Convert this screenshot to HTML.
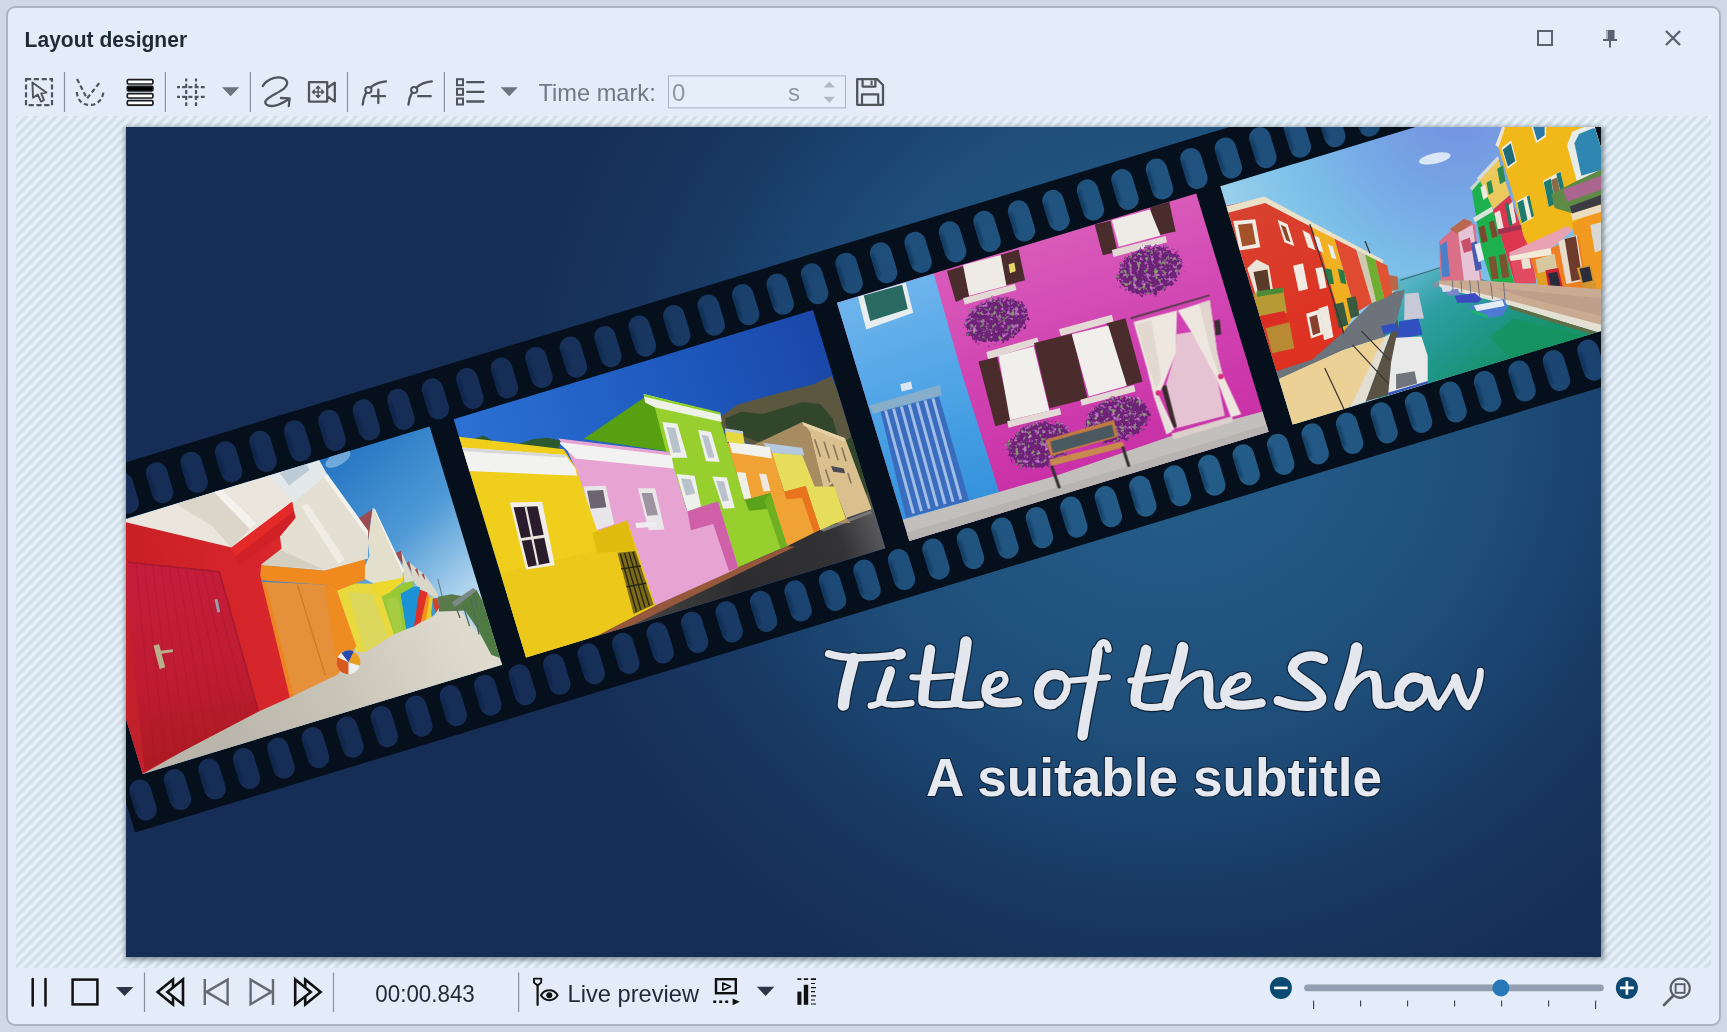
<!DOCTYPE html>
<html><head><meta charset="utf-8"><title>Layout designer</title>
<style>
html,body{margin:0;padding:0;background:#cfd8e4;width:1727px;height:1032px;overflow:hidden;font-family:"Liberation Sans",sans-serif;}
svg{position:absolute;left:0;top:0;display:block}
text{font-family:"Liberation Sans",sans-serif}
</style></head><body>
<svg width="1727" height="1032" viewBox="0 0 1727 1032">
<defs>
<pattern id="hatch" width="10" height="10" patternUnits="userSpaceOnUse" x="2.8" y="0">
<rect width="10" height="10" fill="#e6f2fb"/>
<path d="M-2.5,2.5 L2.5,-2.5 M-2.5,12.5 L12.5,-2.5 M7.5,12.5 L12.5,7.5" stroke="#d3e0e9" stroke-width="3.6"/>
</pattern>
<radialGradient id="bg" gradientUnits="userSpaceOnUse" cx="1170" cy="420" r="640" gradientTransform="translate(1170 420) scale(1.04 1) translate(-1170 -420)">
<stop offset="0" stop-color="#25608c"/><stop offset="0.25" stop-color="#225883"/><stop offset="0.5" stop-color="#1e4e79"/><stop offset="0.62" stop-color="#1b4470"/><stop offset="0.75" stop-color="#183964"/><stop offset="0.88" stop-color="#17325b"/><stop offset="1" stop-color="#162e56"/>
</radialGradient>
<clipPath id="cv"><rect x="126" y="127" width="1475" height="830"/></clipPath>
<filter id="hb" x="-50%" y="-50%" width="200%" height="200%"><feGaussianBlur stdDeviation="1.5"/></filter>
<filter id="sh" x="-5%" y="-5%" width="110%" height="110%"><feGaussianBlur stdDeviation="2.5"/></filter>
</defs>
<!-- window -->
<rect x="7" y="7" width="1713" height="1018" rx="8" ry="8" fill="#e3ecf8" stroke="#a9b4c4" stroke-width="2"/>
<!-- hatch area -->
<rect x="16" y="116" width="1695" height="852" fill="url(#hatch)"/>
<!-- canvas shadow -->
<rect x="125" y="127" width="1479" height="833" fill="#3a4450" opacity="0.55" filter="url(#sh)"/>
<rect x="126" y="127" width="1475" height="830" fill="url(#bg)"/>
<g id="canvas" clip-path="url(#cv)">
<g transform="rotate(-16.9)">
<path fill-rule="evenodd" fill="#06101c" d="M-112.8,478.9H1760V835.9H-112.8ZM-106.34,498.00A10.7,10.7 0 0 1 -84.94,498.00V518.60A10.7,10.7 0 0 1 -106.34,518.60ZM-106.34,796.70A10.7,10.7 0 0 1 -84.94,796.70V817.30A10.7,10.7 0 0 1 -106.34,817.30ZM-70.31,498.00A10.7,10.7 0 0 1 -48.91,498.00V518.60A10.7,10.7 0 0 1 -70.31,518.60ZM-70.31,796.70A10.7,10.7 0 0 1 -48.91,796.70V817.30A10.7,10.7 0 0 1 -70.31,817.30ZM-34.28,498.00A10.7,10.7 0 0 1 -12.88,498.00V518.60A10.7,10.7 0 0 1 -34.28,518.60ZM-34.28,796.70A10.7,10.7 0 0 1 -12.88,796.70V817.30A10.7,10.7 0 0 1 -34.28,817.30ZM1.75,498.00A10.7,10.7 0 0 1 23.15,498.00V518.60A10.7,10.7 0 0 1 1.75,518.60ZM1.75,796.70A10.7,10.7 0 0 1 23.15,796.70V817.30A10.7,10.7 0 0 1 1.75,817.30ZM37.78,498.00A10.7,10.7 0 0 1 59.18,498.00V518.60A10.7,10.7 0 0 1 37.78,518.60ZM37.78,796.70A10.7,10.7 0 0 1 59.18,796.70V817.30A10.7,10.7 0 0 1 37.78,817.30ZM73.81,498.00A10.7,10.7 0 0 1 95.21,498.00V518.60A10.7,10.7 0 0 1 73.81,518.60ZM73.81,796.70A10.7,10.7 0 0 1 95.21,796.70V817.30A10.7,10.7 0 0 1 73.81,817.30ZM109.84,498.00A10.7,10.7 0 0 1 131.24,498.00V518.60A10.7,10.7 0 0 1 109.84,518.60ZM109.84,796.70A10.7,10.7 0 0 1 131.24,796.70V817.30A10.7,10.7 0 0 1 109.84,817.30ZM145.87,498.00A10.7,10.7 0 0 1 167.27,498.00V518.60A10.7,10.7 0 0 1 145.87,518.60ZM145.87,796.70A10.7,10.7 0 0 1 167.27,796.70V817.30A10.7,10.7 0 0 1 145.87,817.30ZM181.90,498.00A10.7,10.7 0 0 1 203.30,498.00V518.60A10.7,10.7 0 0 1 181.90,518.60ZM181.90,796.70A10.7,10.7 0 0 1 203.30,796.70V817.30A10.7,10.7 0 0 1 181.90,817.30ZM217.93,498.00A10.7,10.7 0 0 1 239.33,498.00V518.60A10.7,10.7 0 0 1 217.93,518.60ZM217.93,796.70A10.7,10.7 0 0 1 239.33,796.70V817.30A10.7,10.7 0 0 1 217.93,817.30ZM253.96,498.00A10.7,10.7 0 0 1 275.36,498.00V518.60A10.7,10.7 0 0 1 253.96,518.60ZM253.96,796.70A10.7,10.7 0 0 1 275.36,796.70V817.30A10.7,10.7 0 0 1 253.96,817.30ZM289.99,498.00A10.7,10.7 0 0 1 311.39,498.00V518.60A10.7,10.7 0 0 1 289.99,518.60ZM289.99,796.70A10.7,10.7 0 0 1 311.39,796.70V817.30A10.7,10.7 0 0 1 289.99,817.30ZM326.02,498.00A10.7,10.7 0 0 1 347.42,498.00V518.60A10.7,10.7 0 0 1 326.02,518.60ZM326.02,796.70A10.7,10.7 0 0 1 347.42,796.70V817.30A10.7,10.7 0 0 1 326.02,817.30ZM362.05,498.00A10.7,10.7 0 0 1 383.45,498.00V518.60A10.7,10.7 0 0 1 362.05,518.60ZM362.05,796.70A10.7,10.7 0 0 1 383.45,796.70V817.30A10.7,10.7 0 0 1 362.05,817.30ZM398.08,498.00A10.7,10.7 0 0 1 419.48,498.00V518.60A10.7,10.7 0 0 1 398.08,518.60ZM398.08,796.70A10.7,10.7 0 0 1 419.48,796.70V817.30A10.7,10.7 0 0 1 398.08,817.30ZM434.11,498.00A10.7,10.7 0 0 1 455.51,498.00V518.60A10.7,10.7 0 0 1 434.11,518.60ZM434.11,796.70A10.7,10.7 0 0 1 455.51,796.70V817.30A10.7,10.7 0 0 1 434.11,817.30ZM470.14,498.00A10.7,10.7 0 0 1 491.54,498.00V518.60A10.7,10.7 0 0 1 470.14,518.60ZM470.14,796.70A10.7,10.7 0 0 1 491.54,796.70V817.30A10.7,10.7 0 0 1 470.14,817.30ZM506.17,498.00A10.7,10.7 0 0 1 527.57,498.00V518.60A10.7,10.7 0 0 1 506.17,518.60ZM506.17,796.70A10.7,10.7 0 0 1 527.57,796.70V817.30A10.7,10.7 0 0 1 506.17,817.30ZM542.20,498.00A10.7,10.7 0 0 1 563.60,498.00V518.60A10.7,10.7 0 0 1 542.20,518.60ZM542.20,796.70A10.7,10.7 0 0 1 563.60,796.70V817.30A10.7,10.7 0 0 1 542.20,817.30ZM578.23,498.00A10.7,10.7 0 0 1 599.63,498.00V518.60A10.7,10.7 0 0 1 578.23,518.60ZM578.23,796.70A10.7,10.7 0 0 1 599.63,796.70V817.30A10.7,10.7 0 0 1 578.23,817.30ZM614.26,498.00A10.7,10.7 0 0 1 635.66,498.00V518.60A10.7,10.7 0 0 1 614.26,518.60ZM614.26,796.70A10.7,10.7 0 0 1 635.66,796.70V817.30A10.7,10.7 0 0 1 614.26,817.30ZM650.29,498.00A10.7,10.7 0 0 1 671.69,498.00V518.60A10.7,10.7 0 0 1 650.29,518.60ZM650.29,796.70A10.7,10.7 0 0 1 671.69,796.70V817.30A10.7,10.7 0 0 1 650.29,817.30ZM686.32,498.00A10.7,10.7 0 0 1 707.72,498.00V518.60A10.7,10.7 0 0 1 686.32,518.60ZM686.32,796.70A10.7,10.7 0 0 1 707.72,796.70V817.30A10.7,10.7 0 0 1 686.32,817.30ZM722.35,498.00A10.7,10.7 0 0 1 743.75,498.00V518.60A10.7,10.7 0 0 1 722.35,518.60ZM722.35,796.70A10.7,10.7 0 0 1 743.75,796.70V817.30A10.7,10.7 0 0 1 722.35,817.30ZM758.38,498.00A10.7,10.7 0 0 1 779.78,498.00V518.60A10.7,10.7 0 0 1 758.38,518.60ZM758.38,796.70A10.7,10.7 0 0 1 779.78,796.70V817.30A10.7,10.7 0 0 1 758.38,817.30ZM794.41,498.00A10.7,10.7 0 0 1 815.81,498.00V518.60A10.7,10.7 0 0 1 794.41,518.60ZM794.41,796.70A10.7,10.7 0 0 1 815.81,796.70V817.30A10.7,10.7 0 0 1 794.41,817.30ZM830.44,498.00A10.7,10.7 0 0 1 851.84,498.00V518.60A10.7,10.7 0 0 1 830.44,518.60ZM830.44,796.70A10.7,10.7 0 0 1 851.84,796.70V817.30A10.7,10.7 0 0 1 830.44,817.30ZM866.47,498.00A10.7,10.7 0 0 1 887.87,498.00V518.60A10.7,10.7 0 0 1 866.47,518.60ZM866.47,796.70A10.7,10.7 0 0 1 887.87,796.70V817.30A10.7,10.7 0 0 1 866.47,817.30ZM902.50,498.00A10.7,10.7 0 0 1 923.90,498.00V518.60A10.7,10.7 0 0 1 902.50,518.60ZM902.50,796.70A10.7,10.7 0 0 1 923.90,796.70V817.30A10.7,10.7 0 0 1 902.50,817.30ZM938.53,498.00A10.7,10.7 0 0 1 959.93,498.00V518.60A10.7,10.7 0 0 1 938.53,518.60ZM938.53,796.70A10.7,10.7 0 0 1 959.93,796.70V817.30A10.7,10.7 0 0 1 938.53,817.30ZM974.56,498.00A10.7,10.7 0 0 1 995.96,498.00V518.60A10.7,10.7 0 0 1 974.56,518.60ZM974.56,796.70A10.7,10.7 0 0 1 995.96,796.70V817.30A10.7,10.7 0 0 1 974.56,817.30ZM1010.59,498.00A10.7,10.7 0 0 1 1031.99,498.00V518.60A10.7,10.7 0 0 1 1010.59,518.60ZM1010.59,796.70A10.7,10.7 0 0 1 1031.99,796.70V817.30A10.7,10.7 0 0 1 1010.59,817.30ZM1046.62,498.00A10.7,10.7 0 0 1 1068.02,498.00V518.60A10.7,10.7 0 0 1 1046.62,518.60ZM1046.62,796.70A10.7,10.7 0 0 1 1068.02,796.70V817.30A10.7,10.7 0 0 1 1046.62,817.30ZM1082.65,498.00A10.7,10.7 0 0 1 1104.05,498.00V518.60A10.7,10.7 0 0 1 1082.65,518.60ZM1082.65,796.70A10.7,10.7 0 0 1 1104.05,796.70V817.30A10.7,10.7 0 0 1 1082.65,817.30ZM1118.68,498.00A10.7,10.7 0 0 1 1140.08,498.00V518.60A10.7,10.7 0 0 1 1118.68,518.60ZM1118.68,796.70A10.7,10.7 0 0 1 1140.08,796.70V817.30A10.7,10.7 0 0 1 1118.68,817.30ZM1154.71,498.00A10.7,10.7 0 0 1 1176.11,498.00V518.60A10.7,10.7 0 0 1 1154.71,518.60ZM1154.71,796.70A10.7,10.7 0 0 1 1176.11,796.70V817.30A10.7,10.7 0 0 1 1154.71,817.30ZM1190.74,498.00A10.7,10.7 0 0 1 1212.14,498.00V518.60A10.7,10.7 0 0 1 1190.74,518.60ZM1190.74,796.70A10.7,10.7 0 0 1 1212.14,796.70V817.30A10.7,10.7 0 0 1 1190.74,817.30ZM1226.77,498.00A10.7,10.7 0 0 1 1248.17,498.00V518.60A10.7,10.7 0 0 1 1226.77,518.60ZM1226.77,796.70A10.7,10.7 0 0 1 1248.17,796.70V817.30A10.7,10.7 0 0 1 1226.77,817.30ZM1262.80,498.00A10.7,10.7 0 0 1 1284.20,498.00V518.60A10.7,10.7 0 0 1 1262.80,518.60ZM1262.80,796.70A10.7,10.7 0 0 1 1284.20,796.70V817.30A10.7,10.7 0 0 1 1262.80,817.30ZM1298.83,498.00A10.7,10.7 0 0 1 1320.23,498.00V518.60A10.7,10.7 0 0 1 1298.83,518.60ZM1298.83,796.70A10.7,10.7 0 0 1 1320.23,796.70V817.30A10.7,10.7 0 0 1 1298.83,817.30ZM1334.86,498.00A10.7,10.7 0 0 1 1356.26,498.00V518.60A10.7,10.7 0 0 1 1334.86,518.60ZM1334.86,796.70A10.7,10.7 0 0 1 1356.26,796.70V817.30A10.7,10.7 0 0 1 1334.86,817.30ZM1370.89,498.00A10.7,10.7 0 0 1 1392.29,498.00V518.60A10.7,10.7 0 0 1 1370.89,518.60ZM1370.89,796.70A10.7,10.7 0 0 1 1392.29,796.70V817.30A10.7,10.7 0 0 1 1370.89,817.30ZM1406.92,498.00A10.7,10.7 0 0 1 1428.32,498.00V518.60A10.7,10.7 0 0 1 1406.92,518.60ZM1406.92,796.70A10.7,10.7 0 0 1 1428.32,796.70V817.30A10.7,10.7 0 0 1 1406.92,817.30ZM1442.95,498.00A10.7,10.7 0 0 1 1464.35,498.00V518.60A10.7,10.7 0 0 1 1442.95,518.60ZM1442.95,796.70A10.7,10.7 0 0 1 1464.35,796.70V817.30A10.7,10.7 0 0 1 1442.95,817.30ZM1478.98,498.00A10.7,10.7 0 0 1 1500.38,498.00V518.60A10.7,10.7 0 0 1 1478.98,518.60ZM1478.98,796.70A10.7,10.7 0 0 1 1500.38,796.70V817.30A10.7,10.7 0 0 1 1478.98,817.30ZM1515.01,498.00A10.7,10.7 0 0 1 1536.41,498.00V518.60A10.7,10.7 0 0 1 1515.01,518.60ZM1515.01,796.70A10.7,10.7 0 0 1 1536.41,796.70V817.30A10.7,10.7 0 0 1 1515.01,817.30ZM1551.04,498.00A10.7,10.7 0 0 1 1572.44,498.00V518.60A10.7,10.7 0 0 1 1551.04,518.60ZM1551.04,796.70A10.7,10.7 0 0 1 1572.44,796.70V817.30A10.7,10.7 0 0 1 1551.04,817.30ZM1587.07,498.00A10.7,10.7 0 0 1 1608.47,498.00V518.60A10.7,10.7 0 0 1 1587.07,518.60ZM1587.07,796.70A10.7,10.7 0 0 1 1608.47,796.70V817.30A10.7,10.7 0 0 1 1587.07,817.30ZM1623.10,498.00A10.7,10.7 0 0 1 1644.50,498.00V518.60A10.7,10.7 0 0 1 1623.10,518.60ZM1623.10,796.70A10.7,10.7 0 0 1 1644.50,796.70V817.30A10.7,10.7 0 0 1 1623.10,817.30ZM1659.13,498.00A10.7,10.7 0 0 1 1680.53,498.00V518.60A10.7,10.7 0 0 1 1659.13,518.60ZM1659.13,796.70A10.7,10.7 0 0 1 1680.53,796.70V817.30A10.7,10.7 0 0 1 1659.13,817.30ZM1695.16,498.00A10.7,10.7 0 0 1 1716.56,498.00V518.60A10.7,10.7 0 0 1 1695.16,518.60ZM1695.16,796.70A10.7,10.7 0 0 1 1716.56,796.70V817.30A10.7,10.7 0 0 1 1695.16,817.30ZM1731.19,498.00A10.7,10.7 0 0 1 1752.59,498.00V518.60A10.7,10.7 0 0 1 1731.19,518.60ZM1731.19,796.70A10.7,10.7 0 0 1 1752.59,796.70V817.30A10.7,10.7 0 0 1 1731.19,817.30Z"/>
<path d="M-104.84,498.00V518.60M-104.84,796.70V817.30M-68.81,498.00V518.60M-68.81,796.70V817.30M-32.78,498.00V518.60M-32.78,796.70V817.30M3.25,498.00V518.60M3.25,796.70V817.30M39.28,498.00V518.60M39.28,796.70V817.30M75.31,498.00V518.60M75.31,796.70V817.30M111.34,498.00V518.60M111.34,796.70V817.30M147.37,498.00V518.60M147.37,796.70V817.30M183.40,498.00V518.60M183.40,796.70V817.30M219.43,498.00V518.60M219.43,796.70V817.30M255.46,498.00V518.60M255.46,796.70V817.30M291.49,498.00V518.60M291.49,796.70V817.30M327.52,498.00V518.60M327.52,796.70V817.30M363.55,498.00V518.60M363.55,796.70V817.30M399.58,498.00V518.60M399.58,796.70V817.30M435.61,498.00V518.60M435.61,796.70V817.30M471.64,498.00V518.60M471.64,796.70V817.30M507.67,498.00V518.60M507.67,796.70V817.30M543.70,498.00V518.60M543.70,796.70V817.30M579.73,498.00V518.60M579.73,796.70V817.30M615.76,498.00V518.60M615.76,796.70V817.30M651.79,498.00V518.60M651.79,796.70V817.30M687.82,498.00V518.60M687.82,796.70V817.30M723.85,498.00V518.60M723.85,796.70V817.30M759.88,498.00V518.60M759.88,796.70V817.30M795.91,498.00V518.60M795.91,796.70V817.30M831.94,498.00V518.60M831.94,796.70V817.30M867.97,498.00V518.60M867.97,796.70V817.30M904.00,498.00V518.60M904.00,796.70V817.30M940.03,498.00V518.60M940.03,796.70V817.30M976.06,498.00V518.60M976.06,796.70V817.30M1012.09,498.00V518.60M1012.09,796.70V817.30M1048.12,498.00V518.60M1048.12,796.70V817.30M1084.15,498.00V518.60M1084.15,796.70V817.30M1120.18,498.00V518.60M1120.18,796.70V817.30M1156.21,498.00V518.60M1156.21,796.70V817.30M1192.24,498.00V518.60M1192.24,796.70V817.30M1228.27,498.00V518.60M1228.27,796.70V817.30M1264.30,498.00V518.60M1264.30,796.70V817.30M1300.33,498.00V518.60M1300.33,796.70V817.30M1336.36,498.00V518.60M1336.36,796.70V817.30M1372.39,498.00V518.60M1372.39,796.70V817.30M1408.42,498.00V518.60M1408.42,796.70V817.30M1444.45,498.00V518.60M1444.45,796.70V817.30M1480.48,498.00V518.60M1480.48,796.70V817.30M1516.51,498.00V518.60M1516.51,796.70V817.30M1552.54,498.00V518.60M1552.54,796.70V817.30M1588.57,498.00V518.60M1588.57,796.70V817.30M1624.60,498.00V518.60M1624.60,796.70V817.30M1660.63,498.00V518.60M1660.63,796.70V817.30M1696.66,498.00V518.60M1696.66,796.70V817.30M1732.69,498.00V518.60M1732.69,796.70V817.30" stroke="#0a1830" stroke-opacity="0.45" stroke-width="4" stroke-linecap="round" fill="none" filter="url(#hb)"/>
</g>
<defs>
<clipPath id="p1"><rect transform="rotate(-16.9)" x="-88.4" y="533" width="375.5" height="249"/></clipPath>
<clipPath id="p2"><rect transform="rotate(-16.9)" x="312.2" y="533" width="375.5" height="249"/></clipPath>
<clipPath id="p3"><rect transform="rotate(-16.9)" x="712.8" y="533" width="375.5" height="249"/></clipPath>
<clipPath id="p4"><rect transform="rotate(-16.9)" x="1113.4" y="533" width="375.5" height="249"/></clipPath>
</defs>
<defs><linearGradient id="sky1" gradientUnits="userSpaceOnUse" x1="600" y1="100" x2="980" y2="520"><stop offset="0" stop-color="#2474c2"/><stop offset="0.55" stop-color="#4f9ad6"/><stop offset="1" stop-color="#b6d8ef"/></linearGradient><linearGradient id="gr1" gradientUnits="userSpaceOnUse" x1="300" y1="950" x2="950" y2="560"><stop offset="0" stop-color="#b9b5aa"/><stop offset="0.5" stop-color="#c9c5b9"/><stop offset="1" stop-color="#dedacd"/></linearGradient><linearGradient id="red1" gradientUnits="userSpaceOnUse" x1="20" y1="600" x2="450" y2="500"><stop offset="0" stop-color="#c11f24"/><stop offset="1" stop-color="#d8262c"/></linearGradient><linearGradient id="door1" gradientUnits="userSpaceOnUse" x1="150" y1="340" x2="250" y2="950"><stop offset="0" stop-color="#c51d3c"/><stop offset="0.6" stop-color="#bf1c32"/><stop offset="1" stop-color="#ad1a22"/></linearGradient><linearGradient id="red1c" gradientUnits="userSpaceOnUse" x1="0" y1="500" x2="520" y2="400"><stop offset="0" stop-color="#c61f24"/><stop offset="1" stop-color="#d9272c"/></linearGradient></defs>
<g clip-path="url(#p1)"><g transform="translate(120,420) scale(0.34874)">
<rect x="-200" y="-100" width="1500" height="1300" fill="url(#sky1)"/>
<ellipse cx="625" cy="112" rx="40" ry="18" fill="#8fbfe6" opacity="0.7" transform="rotate(-30 625 112)"/>
<polygon points="60,1005 160,962 400,815 490,775 690,650 830,585 905,540 960,528 1100,700 1100,720 70,1030" fill="url(#gr1)" />
<g transform="translate(516.15,0) scale(0.77787)">
<polygon points="508,652 560,642 600,650 640,640 660,700 570,704 512,706" fill="#5a7a4c" />
<polygon points="600,660 650,625 690,700 745,880 705,865 655,770 610,705" fill="#4f7a44" />
<polygon points="560,672 640,618 650,630 570,690" fill="#7a8a88" />
<path d="M575,690 L590,730 M600,680 L625,760 M630,660 L660,790 M640,640 L655,690" stroke="#55685e" stroke-width="5" fill="none"/>
<path d="M508,586 L524,650" stroke="#6a7a80" stroke-width="4"/>
<polygon points="400,522 430,548 455,566 480,598 510,645 506,657 440,622 420,596" fill="#d9d7c8" />
<polygon points="392,528 402,520 412,560" fill="#9a4c52" />
<polygon points="424,552 432,546 440,580" fill="#9a4c52" />
<polygon points="448,570 456,565 462,592" fill="#9a4c52" />
<polygon points="475,660 506,655 513,690 496,718 485,726" fill="#3a9ad0" />
<polygon points="488,662 506,656 513,690 500,712" fill="#d8402c" />
<polygon points="455,665 490,650 482,728 465,736" fill="#e6d030" />
<polygon points="430,660 470,640 478,652 465,736 445,746" fill="#f0921e" />
<polygon points="395,665 440,625 470,636 445,746 420,761" fill="#e0302a" />
<polygon points="370,640 415,614 442,616 420,761 390,771" fill="#1b92d4" />
<polygon points="372,482 421,592 385,601 380,556" fill="#dddcc8" />
<polygon points="350,492 373,481 379,532" fill="#9a4c52" />
<polygon points="300,650 330,635 385,600 421,594 416,616 370,641 391,771 345,791" fill="#98c932" />
<polygon points="318,662 360,650 380,770 348,788" fill="#a6cc44" />
<polygon points="100,600 270,604 300,650 346,790 240,856 205,852 140,700" fill="#e9d93c" />
<polygon points="178,632 266,642 326,800 236,852" fill="#dcd85e" />
<polygon points="270,600 380,570 381,596 330,636 300,652 270,622" fill="#ecd92c" />
<polygon points="268,324 381,556 376,582 270,602 222,578 256,500 250,450" fill="#e2e0cc" />
<polygon points="268,324 276,328 384,556 378,562" fill="#f4f2ea" />
<polygon points="198,376 266,328 250,452" fill="#9a4c52" />
</g>
<g transform="translate(0,114.70) scale(0.88915)">
<polygon points="436,392 660,402 722,590 702,692 548,766 452,372" fill="#e5903a" />
<polygon points="660,402 700,422 762,600 702,692" fill="#ee8c22" />
<polygon points="436,392 470,396 560,760 548,766" fill="#ec8424" />
<path d="M572,402 L662,694" stroke="#c87a2c" stroke-width="4"/>
<polygon points="452,338 660,356 790,312 790,385 700,422 660,402 452,388" fill="#f08a1e" />
<polygon points="480,150 662,48 800,240 800,318 660,356 450,338 480,300" fill="#e3dfd2" />
<polygon points="655,52 668,44 800,228 800,248" fill="#f4f2ec" />
<polygon points="585,150 605,140 725,320 705,335" fill="#f0ede5" />
<polygon points="520,290 600,328 655,352 450,338" fill="#d4cfc0" />
<polygon points="470,52 640,-4 668,46 560,138" fill="#e3e8ea" />
<polygon points="515,42 600,14 612,32 545,82" fill="#bccbd6" />
<polygon points="0,196 480,48 560,135 360,284 0,206" fill="#eae6dd" />
<polygon points="180,142 310,100 425,215 360,284 300,215" fill="#dbd6c9" />
<polygon points="300,100 325,92 440,205 418,222" fill="#f4f2ed" />
<polygon points="0,196 360,282 555,135 566,186 516,246 521,286 456,336 452,372 548,766 446,812 190,946 60,1020 0,820" fill="url(#red1c)" />
<polygon points="360,282 555,135 560,166 372,312" fill="#e42a28" />
<polygon points="372,312 560,166 566,186 516,246 380,345" fill="#d02226" />
<polygon points="25,330 320,360 446,810 192,944 80,1004 20,800 20,340" fill="url(#door1)" />
<polygon points="0,330 25,332 20,420 80,1004 60,1020 0,830" fill="#c2202a" />
<path d="M52,333 L113,983 M79,335 L147,965 M105,338 L180,948 M132,341 L213,931 M159,344 L246,914 M186,346 L280,896 M213,349 L313,879 M240,352 L346,862 M266,355 L379,845 M293,357 L413,827" stroke="#a3152c" stroke-width="2.5" opacity="0.55" fill="none"/>
<path d="M25,330 L320,360 L446,810" stroke="#a8182e" stroke-width="5" fill="none"/>
<polygon points="108,598 126,594 146,668 128,674" fill="#b8b08a" />
<polygon points="126,616 170,610 171,619 128,626" fill="#b8b08a" />
<polygon points="305,450 315,448 323,490 314,492" fill="#9aa0a8" />
</g>
<circle cx="655" cy="695" r="34" fill="#eeeeee"/>
<path d="M655,661 A34,34 0 0 1 688,705 L655,695Z" fill="#e8a020"/>
<path d="M655,729 A34,34 0 0 1 624,680 L655,695Z" fill="#d85a20"/>
<path d="M635,668 A34,34 0 0 1 670,664 L655,695Z" fill="#2a4ab0"/>
</g></g>
<defs><linearGradient id="sky2" gradientUnits="userSpaceOnUse" x1="1050" y1="40" x2="100" y2="420"><stop offset="0" stop-color="#1a47a8"/><stop offset="0.5" stop-color="#1f5cc2"/><stop offset="1" stop-color="#2b70d2"/></linearGradient><linearGradient id="rd2" gradientUnits="userSpaceOnUse" x1="500" y1="920" x2="1220" y2="620"><stop offset="0" stop-color="#4a4846"/><stop offset="0.45" stop-color="#2c2c2e"/><stop offset="0.85" stop-color="#333335"/><stop offset="1" stop-color="#5a5a5c"/></linearGradient></defs>
<g clip-path="url(#p2)"><g transform="translate(440,300) scale(0.35853)">
<rect x="-100" y="-100" width="1500" height="1300" fill="url(#sky2)"/>
<polygon points="780,328 830,292 900,272 960,256 1040,236 1092,212 1260,620 1000,450 860,400 790,362" fill="#5c573f" />
<polygon points="795,330 840,312 900,318 960,300 1010,285 1060,290 1095,330 1110,380 900,400 860,385 800,362" fill="#2c4529"  opacity="0.9"/>
<polygon points="1120,400 1150,380 1200,520 1180,560" fill="#2c4529"  opacity="0.9"/>
<polygon points="420,945 600,852 830,745 968,686 1060,636 1215,572 1260,690 238,1010" fill="url(#rd2)" />
<polygon points="430,940 600,852 830,746 968,687 990,688 650,852 500,925" fill="#96583c" />
<polygon points="1060,641 1200,588 1206,594 1070,646" fill="#77777a" />
<g transform="translate(613.61,83.67) scale(0.64863)">
<polygon points="400,495 612,396 645,440 705,690 820,830 600,830 480,505" fill="#a68c60" />
<polygon points="612,396 796,466 910,770 800,808 742,660 705,690 645,440" fill="#d9c08e" />
<polygon points="612,396 796,466 792,480 618,412" fill="#e6d2a8" />
<polygon points="705,690 742,660 800,808 765,818" fill="#8a7450" />
<polygon points="735,585 790,596 796,616 745,610" fill="#4a4c54" />
<path d="M665,470 L690,545 M705,480 L728,552 M745,492 L766,560 M782,505 L800,565 M712,600 L730,655 M808,615 L822,660" stroke="#8a7658" stroke-width="7"/>
</g>
<polygon points="925,425 1010,432 1045,520 1100,520 1132,610 1060,642 1020,520 960,535" fill="#e6de5a" />
<polygon points="900,398 1010,412 1016,434 925,426" fill="#b4c8de" />
<polygon points="800,398 925,420 960,535 1020,520 1060,641 968,687 920,540 850,560" fill="#f0a334" />
<polygon points="960,535 1020,518 1060,641 1042,648 1010,552 966,556" fill="#e8741e" />
<polygon points="805,394 920,410 926,442 815,426" fill="#f1f1ee" />
<polygon points="795,365 845,372 850,402 800,396" fill="#e6d840" />
<polygon points="795,358 845,366 846,374 796,366" fill="#c0ccd8" />
<polygon points="828,480 852,482 868,552 846,556" fill="#efefe8" />
<polygon points="890,484 910,486 922,532 902,534" fill="#efe8e0" />
<polygon points="400,388 570,272 600,295 632,422" fill="#56a012" />
<polygon points="598,295 782,336 802,400 850,560 922,540 968,686 830,746 775,562 690,590 650,468 630,420" fill="#97d02e" />
<polygon points="850,558 922,538 934,580 862,588" fill="#5aa21a" />
<polygon points="922,540 968,686 950,694 905,560" fill="#6fb020" />
<polygon points="568,262 782,316 786,340 598,299 572,286" fill="#eef2e6" />
<polygon points="568,262 782,314 782,320 570,270" fill="#8ed02a" />
<polygon points="620,340 662,345 690,440 645,440" fill="#eef0ee" />
<polygon points="720,362 756,368 780,452 742,450" fill="#eef0ee" />
<polygon points="660,485 710,490 728,576 690,590" fill="#eef0ee" />
<polygon points="760,492 800,495 822,580 790,582" fill="#eef0ee" />
<polygon points="632,354 656,357 672,425 650,426" fill="#b9c2cc" />
<polygon points="730,376 748,379 766,440 748,440" fill="#b9c2cc" />
<polygon points="672,498 700,500 712,540 686,545" fill="#b9c2cc" />
<polygon points="770,504 792,506 806,560 788,562" fill="#b9c2cc" />
<polygon points="330,386 640,424 652,468 690,590 775,562 832,746 800,762 600,852 545,700 522,615 440,650 378,470 355,420" fill="#e7a4d2" />
<polygon points="690,590 775,562 832,746 806,756 762,625 700,642" fill="#cf60a8" />
<polygon points="330,396 646,434 652,470 378,442 355,420" fill="#f3f2f2" />
<polygon points="400,520 462,518 486,625 425,646" fill="#e9e6ea" />
<polygon points="410,532 455,530 464,578 420,582" fill="#6c6470" />
<polygon points="552,525 600,525 626,640 582,642" fill="#e9e6ea" />
<polygon points="562,538 592,538 608,600 578,602" fill="#9c94a0" />
<polygon points="545,622 600,618 604,632 548,636" fill="#f0eef0" />
<polygon points="85,392 120,378 155,396" fill="#2c5a30" />
<polygon points="215,402 262,388 300,384 335,392 332,418" fill="#2c5a30" />
<polygon points="40,380 345,416 380,470 442,655 522,615 600,852 440,935 238,1010 0,400" fill="#efcf1c" />
<polygon points="170,760 430,700 425,650 522,615 600,852 440,935 238,1010" fill="#ebc81a" />
<polygon points="425,650 522,615 545,700 440,705" fill="#e0bc10" />
<polygon points="40,410 350,432 378,470 382,490 60,476" fill="#f2f2f0" />
<polygon points="40,410 350,432 352,440 42,420" fill="#d8d8d8" />
<polygon points="195,565 285,563 320,740 240,752" fill="#f0eee6" />
<polygon points="205,578 272,575 306,733 246,745" fill="#2a1c2c" />
<polygon points="236,578 242,577 276,738 270,740" fill="#e8e4dc" />
<polygon points="218,665 290,655 292,663 220,673" fill="#e8e4dc" />
<polygon points="495,705 545,700 596,850 540,876" fill="#7c6c1a" />
<path d="M503,708 L548,870 M515,706 L560,864 M527,704 L572,858 M538,702 L584,853 M505,750 L560,742 M520,800 L575,790" stroke="#2a2614" stroke-width="4" fill="none"/>
</g></g>
<defs><linearGradient id="pk3" gradientUnits="userSpaceOnUse" x1="700" y1="100" x2="900" y2="760"><stop offset="0" stop-color="#d95cba"/><stop offset="0.5" stop-color="#d144b2"/><stop offset="1" stop-color="#c92fa6"/></linearGradient><linearGradient id="bl3" gradientUnits="userSpaceOnUse" x1="150" y1="300" x2="350" y2="900"><stop offset="0" stop-color="#6eb4ec"/><stop offset="0.5" stop-color="#4ea4e6"/><stop offset="1" stop-color="#3592dc"/></linearGradient><filter id="fl" x="-25%" y="-25%" width="150%" height="150%"><feTurbulence type="fractalNoise" baseFrequency="0.085" numOctaves="2" seed="4" result="n"/><feDisplacementMap in="SourceGraphic" in2="n" scale="34" xChannelSelector="R" yChannelSelector="G" result="d"/><feColorMatrix in="n" type="matrix" values="0 0 0 0 0.30 0 0 0 0 0.42 0 0 0 0 0.14 3.4 0 0 0 -1.95" result="g0"/><feComposite in="g0" in2="d" operator="in" result="g"/><feColorMatrix in="n" type="matrix" values="0 0 0 0 0.66 0 0 0 0 0.20 0 0 0 0 0.70 0 3.4 0 0 -1.9" result="m0"/><feComposite in="m0" in2="d" operator="in" result="m"/><feMerge><feMergeNode in="d"/><feMergeNode in="m"/><feMergeNode in="g"/></feMerge></filter></defs>
<g clip-path="url(#p3)"><g transform="translate(825,185) scale(0.35853)">
<rect x="-100" y="-100" width="1500" height="1300" fill="url(#pk3)"/>
<polygon points="0,338 303,247 380,520 486,858 190,960 80,640" fill="url(#bl3)" />
<polygon points="200,938 486,856 640,812 960,702 1228,630 1260,690 235,1010" fill="#c3bfbd" />
<polygon points="225,970 1236,668 1260,690 235,1010" fill="#b8b4b2" />
<polygon points="92,312 225,272 246,356 115,403" fill="#e8eef0" />
<polygon points="108,308 215,278 231,346 126,379" fill="#2b6a62" />
<polygon points="122,616 320,558 326,586 134,638" fill="#86aecb" />
<polygon points="155,632 318,590 402,880 226,928" fill="#3a6cbe" />
<polygon points="165,630.0 173,628.0 251,915.0 243,917.0" fill="#b4cdee"  opacity="0.85"/>
<polygon points="187,624.4 195,622.4 273,908.5 265,910.5" fill="#b4cdee"  opacity="0.85"/>
<polygon points="209,618.8 217,616.8 295,902.0 287,904.0" fill="#b4cdee"  opacity="0.85"/>
<polygon points="231,613.2 239,611.2 317,895.5 309,897.5" fill="#b4cdee"  opacity="0.85"/>
<polygon points="253,607.6 261,605.6 339,889.0 331,891.0" fill="#b4cdee"  opacity="0.85"/>
<polygon points="275,602.0 283,600.0 361,882.5 353,884.5" fill="#b4cdee"  opacity="0.85"/>
<polygon points="297,596.4 305,594.4 383,876.0 375,878.0" fill="#b4cdee"  opacity="0.85"/>
<polygon points="210,556 240,548 244,568 214,576" fill="#dde6ee" />
<polygon points="340,240 386,226 402,310 365,326" fill="#4a2c2c" />
<polygon points="486,196 540,180 558,266 506,279" fill="#4a2c2c" />
<polygon points="385,223 490,195 506,281 402,309" fill="#eeebe6" />
<polygon points="385,316 530,276 534,293 390,333" fill="#e2d8d4" />
<polygon points="512,222 528,216 532,240 516,246" fill="#e8d86a" />
<polygon points="752,110 796,100 816,186 775,196" fill="#4a2c2c" />
<polygon points="906,60 960,47 978,130 926,141" fill="#4a2c2c" />
<polygon points="800,98 906,68 936,141 820,172" fill="#eeebe6" />
<polygon points="800,181 950,142 954,160 805,201" fill="#e2d8d4" />
<polygon points="450,466 592,425 597,443 455,486" fill="#e2d8d4" />
<polygon points="652,402 800,362 805,381 658,421" fill="#e2d8d4" />
<polygon points="428,492 480,480 522,660 475,673" fill="#4a2c2c" />
<polygon points="583,441 690,414 732,596 626,623" fill="#4a2c2c" />
<polygon points="785,386 838,372 886,548 840,561" fill="#4a2c2c" />
<polygon points="484,476 582,450 626,630 516,656" fill="#f1efec" />
<polygon points="688,416 790,392 842,560 736,590" fill="#f1efec" />
<polygon points="508,659 655,622 659,640 512,677" fill="#e2d8d4" />
<polygon points="712,599 862,558 866,576 716,616" fill="#e2d8d4" />
<g filter="url(#fl)">
<ellipse cx="478" cy="378" rx="90" ry="60" fill="#6d2278" transform="rotate(-17 478 378)" />
<ellipse cx="905" cy="238" rx="92" ry="64" fill="#6d2278" transform="rotate(-17 905 238)" />
<ellipse cx="600" cy="724" rx="92" ry="62" fill="#6d2278" transform="rotate(-17 600 724)" />
<ellipse cx="815" cy="654" rx="92" ry="60" fill="#6d2278" transform="rotate(-17 815 654)" />
</g>
<g transform="translate(488.10,237.08) scale(0.70293)">
<polygon points="700,255 765,245 862,430 892,578 700,628 652,480 695,330" fill="#e6c3d3" />
<polygon points="640,462 660,456 702,622 686,628" fill="#3a2a2a" />
<polygon points="530,206 702,160 697,330 642,470 627,492 692,632 660,652 610,500 580,380" fill="#eee7e0" />
<polygon points="540,215 600,200 640,430 618,470 585,370" fill="#e2d8d0" />
<polygon points="705,160 832,120 862,330 882,410 957,572 916,584 860,432 762,250" fill="#eee7e0" />
<polygon points="790,135 832,120 862,330 882,410 870,420 835,320" fill="#e0d6ce" />
<polygon points="610,500 627,492 682,642 662,652" fill="#e6dedb" />
<polygon points="680,650 920,580 926,602 690,672" fill="#dbd0cc" />
<path d="M518,192 L832,100" stroke="#4a3a44" stroke-width="7"/>
<circle cx="628" cy="488" r="11" fill="#d8307a"/><circle cx="876" cy="422" r="11" fill="#d8307a"/>
<polygon points="850,200 872,196 878,255 856,260" fill="#3a2a34" />
</g>
<polygon points="615,710 806,655 818,702 630,756" fill="#c07a44" />
<polygon points="628,716 800,668 808,700 636,748" fill="#4a5860" />
<polygon points="625,766 830,715 836,731 632,783" fill="#c78a4c" />
<polygon points="628,784 636,782 658,845 650,847" fill="#30302e" />
<polygon points="826,730 834,728 852,785 844,787" fill="#30302e" />
</g></g>
<defs><radialGradient id="sky4" gradientUnits="userSpaceOnUse" cx="800" cy="-40" r="800"><stop offset="0" stop-color="#7590e0"/><stop offset="0.4" stop-color="#76a8e6"/><stop offset="0.7" stop-color="#7cc0e8"/><stop offset="1" stop-color="#98cfec"/></radialGradient><linearGradient id="wt4" gradientUnits="userSpaceOnUse" x1="660" y1="500" x2="900" y2="820"><stop offset="0" stop-color="#5ab4c6"/><stop offset="0.3" stop-color="#2f9fa4"/><stop offset="0.7" stop-color="#1f9688"/><stop offset="1" stop-color="#17926a"/></linearGradient><linearGradient id="rd4" gradientUnits="userSpaceOnUse" x1="100" y1="300" x2="300" y2="780"><stop offset="0" stop-color="#d8412f"/><stop offset="1" stop-color="#de3020"/></linearGradient></defs>
<g clip-path="url(#p4)"><g transform="translate(1210,120) scale(0.31008)">
<rect x="-100" y="-200" width="1600" height="1400" fill="url(#sky4)"/>
<ellipse cx="725" cy="124" rx="52" ry="17" fill="#e6eef6" opacity="0.9" transform="rotate(-12 725 124)"/>
<polygon points="590,516 745,478 900,520 1300,640 1300,720 700,860 540,900 560,700 600,560" fill="url(#wt4)" />
<polygon points="980,640 1261,712 1261,730 1000,800 900,700" fill="#14935e"  opacity="0.8"/>
<g transform="translate(612.75,0) scale(0.75000)">
<path d="M2,689 L188,630" stroke="#3a6a78" stroke-width="5"/>
<polygon points="168,522 270,430 322,450 352,700 176,700" fill="#d97088" />
<polygon points="214,470 276,424 312,440 250,492" fill="#b86850" />
<polygon points="172,540 200,520 215,672 182,676" fill="#4a80c8" />
<polygon points="250,484 312,452 346,700 276,700" fill="#e6c4d6" />
<polygon points="262,520 300,505 312,560 275,572" fill="#c8506a" />
<polygon points="305,530 330,520 352,640 325,650" fill="#4858b0" />
<polygon points="340,252 422,165 472,322 400,384" fill="#ebc95c" />
<polygon points="330,250 420,155 426,168 340,262" fill="#d9dcd6" />
<polygon points="308,296 342,258 400,384 440,520 492,702 392,694 350,560" fill="#1fb04e" />
<polygon points="300,292 340,250 346,262 310,304" fill="#c8d8c8" />
<polygon points="315,420 395,372 402,392 322,440" fill="#d8e4d8" />
<polygon points="400,386 472,324 534,500 560,552 586,702 494,702 440,520" fill="#dc3650" />
<polygon points="470,566 560,552 586,702 496,702" fill="#e24a62" />
<polygon points="420,112 446,0 900,0 900,380 760,470 722,470 560,556 532,502 480,300" fill="#f1b81a" />
<polygon points="410,108 440,28 452,32 424,118" fill="#ece4d4" />
<polygon points="740,442 900,372 900,780 802,745 762,560" fill="#f29a20" />
<polygon points="735,400 900,355 900,385 742,432" fill="#ecdcc0" />
<polygon points="560,590 720,520 770,500 805,722 600,724" fill="#ef7f20" />
<polygon points="582,600 665,575 676,640 592,660" fill="#d8c8a0" />
<polygon points="680,520 760,495 792,690 715,705" fill="#e6dccc" />
<polygon points="708,512 756,500 784,684 738,694" fill="#6e3a2c" />
<polygon points="818,452 865,440 865,560 838,570" fill="#d8d8d4" />
<polygon points="470,570 722,455 742,476 650,552 472,602" fill="#e8a2b2" />
<polygon points="470,586 648,550 652,580 476,606" fill="#f2ead8" />
<polygon points="625,646 680,636 702,726 642,738" fill="#c82232" />
<polygon points="636,660 676,652 690,712 650,720" fill="#2a2c3c" />
<polygon points="760,636 820,620 846,722 790,738" fill="#d49430" />
<polygon points="772,640 815,630 828,690 786,700" fill="#2a2c3c" />
<polygon points="585,660 625,655 635,715 595,722" fill="#e0a020" />
<polygon points="436,120 478,88 502,180 462,212" fill="#f0ece0" />
<polygon points="442,128 476,100 496,176 464,200" fill="#1f6a7a" />
<polygon points="565,28 628,28 628,72 585,100" fill="#f0ece0" />
<polygon points="572,28 622,28 622,66 590,88" fill="#2878a8" />
<polygon points="718,110 740,50 790,30 865,30 865,230 760,262" fill="#e8ece8" />
<polygon points="750,100 770,60 830,36 865,40 865,215 780,240" fill="#2f86b0" />
<polygon points="615,262 690,220 712,320 640,372" fill="#f0ece0" />
<polygon points="618,268 648,252 668,360 640,374" fill="#1f7a70" />
<polygon points="672,232 690,222 708,300 690,310" fill="#1f7a70" />
<polygon points="650,258 676,246 690,318 664,332" fill="#8a6a48" />
<polygon points="500,350 552,322 574,420 524,446" fill="#f0ece0" />
<polygon points="504,356 530,342 548,430 524,444" fill="#1f7a70" />
<polygon points="545,330 556,324 576,412 566,420" fill="#1f7a70" />
<polygon points="650,318 760,262 865,212 865,352 735,400 665,378" fill="#5e8a46" />
<polygon points="700,300 865,240 865,300 720,352" fill="#c45aa8"  opacity="0.75"/>
<polygon points="730,372 865,322 865,362 740,402" fill="#3c3c44" />
<polygon points="346,290 366,276 378,330 358,344" fill="#f0e8e0" />
<polygon points="372,270 392,258 402,310 382,322" fill="#2a8a50" />
<polygon points="418,210 442,196 454,262 430,276" fill="#2a8a50" />
<polygon points="406,400 430,388 446,466 422,478" fill="#ece4dc" />
<polygon points="462,372 484,350 500,440 478,452" fill="#ece4dc" />
<polygon points="452,362 464,352 484,450 470,460" fill="#1f7a60" />
<polygon points="338,462 362,452 378,520 352,530" fill="#7a4a30" />
<polygon points="382,440 404,432 420,500 396,508" fill="#7a4a30" />
<polygon points="380,590 410,585 425,680 395,686" fill="#7a5430" />
<polygon points="425,580 455,575 470,675 440,682" fill="#7a5430" />
<polygon points="420,470 520,450 524,470 424,492" fill="#a03050" />
<polygon points="320,535 345,528 362,600 338,612" fill="#e8e8f4" />
<polygon points="520,600 556,594 564,636 528,642" fill="#e8e4d0" />
<polygon points="165,690 345,690 600,708 900,730 900,915 470,792 170,716" fill="#c9ab92" />
<polygon points="400,720 900,770 900,850 560,770" fill="#bf9f8c" />
<polygon points="170,704 470,776 900,890 900,928 470,797 170,718" fill="#e4e0d4" />
<polygon points="470,797 900,928 900,945 470,812" fill="#5f6e48" />
<path d="M300,690 L305,750 M335,690 L342,760 M390,700 L398,770 M445,700 L452,780 M262,690 L266,740 M225,690 L228,730" stroke="#6a6a78" stroke-width="4" fill="none"/>
<polygon points="300,800 446,770 462,800 442,842 380,850 306,822" fill="#4d7ad2" />
<polygon points="318,798 440,774 450,800 330,822" fill="#e4ecf6" />
<polygon points="300,808 312,830 380,852 372,838" fill="#20b070" />
<polygon points="235,756 322,744 352,770 336,786 246,786" fill="#3c4cc0" />
<polygon points="196,732 250,726 256,752 204,756" fill="#7a86c8" />
<polygon points="178,716 215,712 220,736 184,740" fill="#d8dce8" />
<polygon points="140,700 165,696 168,716 144,720" fill="#8a90a0" />
</g>
<polygon points="200,812 330,770 430,680 520,590 590,555 628,548 604,640 562,700 430,742 215,840" fill="#6c737b" />
<polygon points="215,838 430,742 562,700 545,760 452,925 260,1000" fill="#ecd196" />
<polygon points="562,700 582,690 502,908 452,926" fill="#e2ded2" />
<polygon points="582,690 604,640 612,700 582,884 502,908" fill="#5a5244" />
<polygon points="628,560 672,556 690,640 626,645" fill="#c8cad8" />
<polygon points="610,650 672,640 686,692 604,706" fill="#3150c0" />
<polygon points="552,664 600,655 604,680 560,692" fill="#3150c0" />
<polygon points="600,702 682,698 702,760 702,850 574,892 584,782" fill="#e9e9e9" />
<polygon points="600,820 660,810 668,850 600,868" fill="#70747c" />
<polygon points="574,880 702,842 704,856 576,896" fill="#3a58b8" />
<polygon points="470,415 560,462 592,556 520,592" fill="#cfc9b2" />
<polygon points="500,432 532,448 562,576 536,586" fill="#6fae32" />
<polygon points="532,448 572,470 588,560 562,576" fill="#df5232" />
<polygon points="575,500 605,505 608,545 585,552" fill="#b8674a" />
<polygon points="400,380 470,415 522,590 470,622" fill="#df4a30" />
<polygon points="325,340 400,380 470,622 432,682 360,440" fill="#f0b022" />
<polygon points="40,280 175,250 325,336 362,440 432,682 330,772 200,815 60,330" fill="url(#rd4)" />
<polygon points="40,282 175,247 560,452 556,462 178,268 46,302" fill="#e9e1ca" />
<polygon points="75,326 146,320 162,410 95,421" fill="#f0ece4" />
<polygon points="90,338 136,333 148,400 104,408" fill="#a4522a" />
<polygon points="218,322 250,336 272,406 240,394" fill="#f0ece4" />
<polygon points="228,338 244,345 260,394 246,388" fill="#8a4a2a" />
<polygon points="298,355 322,368 340,420 316,410" fill="#f0ece4" />
<polygon points="335,372 352,380 366,428 350,420" fill="#e8ecf0" />
<polygon points="380,400 396,408 408,450 392,444" fill="#e8ecf0" />
<polygon points="120,478 150,450 190,470 205,560 150,572" fill="#ece4d8" />
<polygon points="140,490 185,482 195,550 155,558" fill="#5a3a28" />
<polygon points="140,560 236,545 248,622 160,642" fill="#b59a36" />
<polygon points="150,552 236,540 238,556 152,570" fill="#4a8a38" />
<polygon points="160,632 240,616 246,650 170,668" fill="#d82c24" />
<polygon points="180,672 256,652 272,736 200,752" fill="#b88a34" />
<polygon points="268,470 300,462 316,545 286,552" fill="#f0ece4" />
<polygon points="340,478 364,474 376,540 354,546" fill="#f0ece4" />
<polygon points="310,625 352,612 366,690 326,705" fill="#f0ece4" />
<polygon points="320,636 345,628 356,685 332,694" fill="#8a4030" />
<polygon points="350,608 380,598 398,700 368,710" fill="#efe8e0" />
<polygon points="398,595 430,588 446,660 416,672" fill="#3a5a40" />
<polygon points="440,575 470,568 482,630 454,640" fill="#3a5a40" />
<polygon points="370,478 392,482 400,530 380,528" fill="#2a7a48" />
<polygon points="412,480 432,486 440,530 422,526" fill="#2a7a48" />
<path d="M488,680 L580,775 M460,725 L575,850 M370,800 L432,932 M322,336 L432,690 M500,390 L516,430" stroke="#3c3630" stroke-width="4" fill="none"/>
</g></g>

<g transform="translate(810,625) scale(0.20266)" fill="none" stroke="#0f2238" stroke-linecap="round" stroke-linejoin="round"><path d="M92,142 C160,168 300,166 440,145" stroke-width="48.8"/><path d="M436,146 L446,143" stroke-width="66.1"/><path d="M215,165 C195,250 170,320 165,395" stroke-width="68.6"/><path d="M395,228 C380,290 350,340 352,372" stroke-width="61.2"/><path d="M352,372 C362,400 430,395 500,385" stroke-width="43.9"/><path d="M352,376 C338,390 318,396 300,398" stroke-width="43.9"/><path d="M592,122 C580,220 555,320 560,375" stroke-width="63.7"/><path d="M560,375 C580,400 650,395 700,390" stroke-width="46.4"/><path d="M505,258 C570,262 640,255 700,250" stroke-width="41.4"/><path d="M770,84 C760,200 725,320 722,378" stroke-width="68.6"/><path d="M722,378 C740,400 790,398 840,392" stroke-width="48.8"/><path d="M885,328 C930,322 978,290 962,255 C950,235 915,235 890,265" stroke-width="41.4"/><path d="M890,265 C875,285 868,300 868,320 C862,380 920,397 1025,378" stroke-width="56.3"/><path d="M1238,250 C1170,226 1120,290 1130,350 C1136,385 1170,398 1200,392" stroke-width="58.7"/><path d="M1200,392 C1230,385 1252,360 1264,330 C1280,276 1255,242 1215,244" stroke-width="46.4"/><path d="M1472,120 C1468,74 1430,72 1418,130" stroke-width="46.4"/><path d="M1418,130 C1405,250 1360,420 1345,545" stroke-width="63.7"/><path d="M1290,274 C1350,270 1420,262 1470,258" stroke-width="41.4"/></g>
<g transform="translate(1110,625) scale(0.22583)" fill="none" stroke="#0f2238" stroke-linecap="round" stroke-linejoin="round"><path d="M160,110 C150,180 105,290 115,340" stroke-width="57.1"/><path d="M115,340 C135,370 190,368 235,360" stroke-width="41.6"/><path d="M90,246 C140,246 200,236 255,228" stroke-width="37.2"/><path d="M322,100 C310,180 270,290 255,355" stroke-width="61.6"/><path d="M265,340 C310,250 400,188 430,225" stroke-width="39.4"/><path d="M430,225 C450,260 420,330 450,352" stroke-width="52.7"/><path d="M450,352 C465,362 480,360 495,355" stroke-width="39.4"/><path d="M520,302 C570,292 622,270 612,235 C600,215 565,218 540,245" stroke-width="37.2"/><path d="M540,245 C520,265 510,280 508,300 C503,352 560,367 670,345" stroke-width="50.5"/><path d="M945,152 C900,123 820,138 808,190 C808,230 920,270 937,320 C942,362 860,377 745,335" stroke-width="52.7"/><path d="M1092,102 C1080,190 1040,290 1018,355" stroke-width="61.6"/><path d="M1030,340 C1070,260 1140,188 1170,225" stroke-width="39.4"/><path d="M1170,225 C1195,260 1170,330 1195,350" stroke-width="52.7"/><path d="M1195,350 C1215,362 1240,358 1260,350" stroke-width="39.4"/><path d="M1374,238 C1320,213 1273,270 1280,320 C1284,350 1310,364 1335,360" stroke-width="52.7"/><path d="M1335,360 C1365,352 1388,330 1397,305 C1412,260 1390,230 1352,234" stroke-width="41.6"/><path d="M1405,245 C1420,290 1425,340 1450,360" stroke-width="50.5"/><path d="M1450,360 C1480,330 1510,270 1530,235" stroke-width="39.4"/><path d="M1530,235 C1545,290 1560,340 1585,358" stroke-width="50.5"/><path d="M1585,358 C1620,320 1640,250 1640,205" stroke-width="41.6"/></g>
<g transform="translate(810,625) scale(0.20266)" fill="none" stroke="#e4e8ee" stroke-linecap="round" stroke-linejoin="round"><path d="M92,142 C160,168 300,166 440,145" stroke-width="37.0"/><path d="M436,146 L446,143" stroke-width="54.3"/><path d="M215,165 C195,250 170,320 165,395" stroke-width="56.7"/><path d="M395,228 C380,290 350,340 352,372" stroke-width="49.3"/><path d="M352,372 C362,400 430,395 500,385" stroke-width="32.1"/><path d="M352,376 C338,390 318,396 300,398" stroke-width="32.1"/><path d="M592,122 C580,220 555,320 560,375" stroke-width="51.8"/><path d="M560,375 C580,400 650,395 700,390" stroke-width="34.5"/><path d="M505,258 C570,262 640,255 700,250" stroke-width="29.6"/><path d="M770,84 C760,200 725,320 722,378" stroke-width="56.7"/><path d="M722,378 C740,400 790,398 840,392" stroke-width="37.0"/><path d="M885,328 C930,322 978,290 962,255 C950,235 915,235 890,265" stroke-width="29.6"/><path d="M890,265 C875,285 868,300 868,320 C862,380 920,397 1025,378" stroke-width="44.4"/><path d="M1238,250 C1170,226 1120,290 1130,350 C1136,385 1170,398 1200,392" stroke-width="46.9"/><path d="M1200,392 C1230,385 1252,360 1264,330 C1280,276 1255,242 1215,244" stroke-width="34.5"/><path d="M1472,120 C1468,74 1430,72 1418,130" stroke-width="34.5"/><path d="M1418,130 C1405,250 1360,420 1345,545" stroke-width="51.8"/><path d="M1290,274 C1350,270 1420,262 1470,258" stroke-width="29.6"/></g>
<g transform="translate(1110,625) scale(0.22583)" fill="none" stroke="#e4e8ee" stroke-linecap="round" stroke-linejoin="round"><path d="M160,110 C150,180 105,290 115,340" stroke-width="46.5"/><path d="M115,340 C135,370 190,368 235,360" stroke-width="31.0"/><path d="M90,246 C140,246 200,236 255,228" stroke-width="26.6"/><path d="M322,100 C310,180 270,290 255,355" stroke-width="50.9"/><path d="M265,340 C310,250 400,188 430,225" stroke-width="28.8"/><path d="M430,225 C450,260 420,330 450,352" stroke-width="42.1"/><path d="M450,352 C465,362 480,360 495,355" stroke-width="28.8"/><path d="M520,302 C570,292 622,270 612,235 C600,215 565,218 540,245" stroke-width="26.6"/><path d="M540,245 C520,265 510,280 508,300 C503,352 560,367 670,345" stroke-width="39.9"/><path d="M945,152 C900,123 820,138 808,190 C808,230 920,270 937,320 C942,362 860,377 745,335" stroke-width="42.1"/><path d="M1092,102 C1080,190 1040,290 1018,355" stroke-width="50.9"/><path d="M1030,340 C1070,260 1140,188 1170,225" stroke-width="28.8"/><path d="M1170,225 C1195,260 1170,330 1195,350" stroke-width="42.1"/><path d="M1195,350 C1215,362 1240,358 1260,350" stroke-width="28.8"/><path d="M1374,238 C1320,213 1273,270 1280,320 C1284,350 1310,364 1335,360" stroke-width="42.1"/><path d="M1335,360 C1365,352 1388,330 1397,305 C1412,260 1390,230 1352,234" stroke-width="31.0"/><path d="M1405,245 C1420,290 1425,340 1450,360" stroke-width="39.9"/><path d="M1450,360 C1480,330 1510,270 1530,235" stroke-width="28.8"/><path d="M1530,235 C1545,290 1560,340 1585,358" stroke-width="39.9"/><path d="M1585,358 C1620,320 1640,250 1640,205" stroke-width="31.0"/></g>
<text id="sub" x="1154" y="796" text-anchor="middle" font-weight="bold" font-size="53" fill="#e6eaf0" stroke="#0f2238" stroke-width="2.2" paint-order="stroke" textLength="456" lengthAdjust="spacingAndGlyphs">A suitable subtitle</text>
</g>
<text x="24.6" y="46.5" font-weight="bold" font-size="22" fill="#1f2937" textLength="162.5" lengthAdjust="spacingAndGlyphs">Layout designer</text>
<rect x="1538" y="31" width="14" height="14" fill="none" stroke="#5b6370" stroke-width="2"/>
<path d="M1666,31 L1680,45 M1680,31 L1666,45" stroke="#5b6370" stroke-width="2.4" fill="none"/>
<path d="M1606,30 H1614.5 V39.5 H1606 Z" fill="#5b6370"/><path d="M1607,30.5 V39" stroke="#e3ecf8" stroke-width="1.2"/><path d="M1603,40 H1617 M1610,40 V47.5" stroke="#5b6370" stroke-width="2" fill="none"/>
<path d="M64.5,72 V112" stroke="#8a929e" stroke-width="1.2"/>
<path d="M165.4,72 V112" stroke="#8a929e" stroke-width="1.2"/>
<path d="M250.4,72 V112" stroke="#8a929e" stroke-width="1.2"/>
<path d="M347.5,72 V112" stroke="#8a929e" stroke-width="1.2"/>
<path d="M444.4,72 V112" stroke="#8a929e" stroke-width="1.2"/>
<rect x="26" y="79.2" width="26" height="26" fill="none" stroke="#50555b" stroke-width="2.2" stroke-dasharray="5.2 2.6" stroke-dashoffset="0"/>
<path d="M32.4,82.4 L33,97.8 L37.8,94.6 L41,101.6 L44,100.2 L41.2,93.4 L46.4,92.6 Z" fill="none" stroke="#50555b" stroke-width="1.9" stroke-linejoin="round"/>
<path d="M77,79 L87,98.5 L100.5,81.5" fill="none" stroke="#50555b" stroke-width="2.2" stroke-dasharray="4.6 2.8"/>
<path d="M76.8,92 C77.5,101 83,105 90,105 C97,105 102.5,100 103.4,92" fill="none" stroke="#50555b" stroke-width="2.2" stroke-dasharray="4.4 2.8"/>
<rect x="127.3" y="79.6" width="25.6" height="4.4" rx="1.2" fill="#fff" stroke="#1a1a1a" stroke-width="1.7"/>
<rect x="127.3" y="86.4" width="25.6" height="4.6" rx="1.2" fill="#000" stroke="#1a1a1a" stroke-width="1.7"/>
<rect x="127.3" y="93.6" width="25.6" height="4.4" rx="1.2" fill="#fff" stroke="#1a1a1a" stroke-width="1.7"/>
<rect x="127.3" y="100.6" width="25.6" height="4.6" rx="1.2" fill="#fff" stroke="#1a1a1a" stroke-width="1.7"/>
<path d="M186.2,78.5 V106 M196,78.5 V106 M177,87.1 H204.6 M177,96.8 H204.6" fill="none" stroke="#50555b" stroke-width="2.2" stroke-dasharray="4 2.2" stroke-dashoffset="1"/>
<path d="M222,87.3 h17.2 l-8.6,8.9 Z" fill="#6b7482"/>
<path d="M500.6,87.3 h17.2 l-8.6,8.9 Z" fill="#6b7482"/>
<path d="M262.8,86 C266,80 274,76.6 281,77.6 C288,79 289,84 284,88.6 C278,93.2 268,97 265.6,101 C264,105.2 270,107 276,105.4 C281,104 286,101 289,99" fill="none" stroke="#50555b" stroke-width="2.3" stroke-linecap="round"/>
<path d="M281,98 L289.6,98.4 L288.8,106" fill="none" stroke="#50555b" stroke-width="2.3" stroke-linecap="round" stroke-linejoin="round"/>
<path d="M309,82.2 H327.2 V101.6 H309 Z M327.2,88 L334.8,82.6 V101.6 L327.2,96.2" fill="none" stroke="#50555b" stroke-width="2.3" stroke-linejoin="round"/>
<path d="M312.6,91.9 H323.6 M318.1,86.4 V97.4 M314.4,90.1 L312.6,91.9 L314.4,93.7 M321.8,90.1 L323.6,91.9 L321.8,93.7 M316.3,88.2 L318.1,86.4 L319.9,88.2 M316.3,95.6 L318.1,97.4 L319.9,95.6" fill="none" stroke="#50555b" stroke-width="1.5" stroke-linecap="round"/>
<path d="M362.7,104.6 C363.2,99 364.6,95.4 366.2,92.6 M370.4,87.6 C374.5,84 380,82 386,81.4" fill="none" stroke="#50555b" stroke-width="2.3" stroke-linecap="round"/>
<circle cx="368.4" cy="90" r="3.1" fill="none" stroke="#50555b" stroke-width="2"/>
<path d="M371.6,96.2 H385 M378.3,89.6 V103" stroke="#50555b" stroke-width="2.3" stroke-linecap="round"/>
<path d="M408.5,104.6 C409.0,99 410.40000000000003,95.4 412.0,92.6 M416.2,87.6 C420.3,84 425.8,82 431.8,81.4" fill="none" stroke="#50555b" stroke-width="2.3" stroke-linecap="round"/>
<circle cx="414.2" cy="90" r="3.1" fill="none" stroke="#50555b" stroke-width="2"/>
<path d="M418.2,96.2 H430.8" stroke="#50555b" stroke-width="2.3" stroke-linecap="round"/>
<rect x="457" y="79.2" width="6" height="6" fill="none" stroke="#50555b" stroke-width="2"/>
<path d="M467.2,82.2 H483.4" stroke="#50555b" stroke-width="2.3" stroke-linecap="round"/>
<rect x="457" y="88.8" width="6" height="6" fill="none" stroke="#50555b" stroke-width="2"/>
<path d="M467.2,91.8 H483.4" stroke="#50555b" stroke-width="2.3" stroke-linecap="round"/>
<rect x="457" y="98.5" width="6" height="6" fill="none" stroke="#50555b" stroke-width="2"/>
<path d="M467.2,101.5 H483.4" stroke="#50555b" stroke-width="2.3" stroke-linecap="round"/>
<text x="538.5" y="100.8" font-size="24" fill="#727985" textLength="117.2" lengthAdjust="spacingAndGlyphs">Time mark:</text>
<rect x="668.5" y="75.9" width="177" height="32" fill="#e6eefa" stroke="#a7b0be" stroke-width="1"/>
<text x="672" y="100.8" font-size="24" fill="#8f96a1">0</text>
<text x="788" y="100.8" font-size="24" fill="#8f96a1">s</text>
<path d="M823.6,87.6 l5.7,-6.2 l5.7,6.2 Z M823.6,96.8 l5.7,6.2 l5.7,-6.2 Z" fill="#b2bac5"/>
<path d="M857.2,79.2 H877.2 L883,85 V104.8 H857.2 Z" fill="none" stroke="#50555b" stroke-width="2.3" stroke-linejoin="round"/>
<path d="M862.6,79.4 V86.6 H875.4 V79.4 M862,104.6 V94.4 H878.2 V104.6" fill="none" stroke="#50555b" stroke-width="2.2" stroke-linejoin="round"/>
<path d="M871.6,80.6 V85" stroke="#50555b" stroke-width="2"/>
<path d="M144.5,972.5 V1012" stroke="#8a929e" stroke-width="1.2"/>
<path d="M333.5,972.5 V1012" stroke="#8a929e" stroke-width="1.2"/>
<path d="M518.6,972.5 V1012" stroke="#8a929e" stroke-width="1.2"/>
<path d="M32.7,979 V1005.4 M45.5,979 V1005.4" stroke="#111111" stroke-width="2.5" stroke-linecap="round"/>
<rect x="72.6" y="979.6" width="24.8" height="24.8" fill="none" stroke="#111111" stroke-width="2.5"/>
<path d="M115.9,987 h17.4 l-8.7,9.1 Z" fill="#2b3547"/>
<path d="M157.6,991.9 L173,979.4 V1004.4 Z" fill="none" stroke="#111111" stroke-width="2.6" stroke-linejoin="miter"/>
<path d="M167.4,991.9 L183,979.4 V1004.4 Z" fill="#e3ecf8" stroke="#111111" stroke-width="2.6" stroke-linejoin="miter"/>
<path d="M204.8,979 V1005 M206.6,991.9 L227.6,979.6 V1004.2 Z" fill="none" stroke="#666a70" stroke-width="2.4" stroke-linejoin="miter"/>
<path d="M273,979 V1005 M271.4,991.9 L250.6,979.6 V1004.2 Z" fill="none" stroke="#666a70" stroke-width="2.4" stroke-linejoin="miter"/>
<path d="M320.6,991.9 L305.2,979.4 V1004.4 Z" fill="none" stroke="#111111" stroke-width="2.6"/>
<path d="M310.8,991.9 L295.2,979.4 V1004.4 Z" fill="#e3ecf8" stroke="#111111" stroke-width="2.6"/>
<text x="375.3" y="1002.2" font-size="24" fill="#1f2937" textLength="99.5" lengthAdjust="spacingAndGlyphs">00:00.843</text>
<path d="M534,978.6 H541.2 V982.6 L537.6,985.4 L534,982.6 Z" fill="none" stroke="#111111" stroke-width="1.9" stroke-linejoin="round"/>
<path d="M537.6,985.6 V1004.8" stroke="#111111" stroke-width="2.2" stroke-linecap="round"/>
<path d="M541,995.2 C545,988.6 553.6,988.6 557.6,995.2 C553.6,1001.8 545,1001.8 541,995.2 Z" fill="none" stroke="#111111" stroke-width="2"/>
<circle cx="549.3" cy="995.2" r="3" fill="#111111"/>
<text x="567.6" y="1002.2" font-size="24" fill="#1f2937" textLength="131.4" lengthAdjust="spacingAndGlyphs">Live preview</text>
<rect x="716" y="979.2" width="19.8" height="14" fill="none" stroke="#111111" stroke-width="2.4"/>
<path d="M722.8,983 V990.2 L730.6,986.6 Z" fill="none" stroke="#111111" stroke-width="1.6" stroke-linejoin="round"/>
<path d="M713.2,1001.8 H731" stroke="#111111" stroke-width="2.6" stroke-dasharray="3 3"/>
<path d="M732.6,998.4 L739.8,1001.8 L732.6,1005.2 Z" fill="#111111"/>
<path d="M756.9,986.8 h17.4 l-8.7,9.3 Z" fill="#2b3547"/>
<rect x="797.4" y="991.6" width="4" height="13.2" fill="#111111"/><rect x="803.8" y="984.8" width="4.4" height="20" fill="#111111"/>
<path d="M797.4,979.2 H801.4 M803.8,979.2 H808.2 M810.8,979.2 H816" stroke="#111111" stroke-width="1.8"/>
<path d="M811,983.5 H815 M811,987.6 H816 M811,991.6 H815 M811,995.8 H816 M811,1000 H815 M811,1004 H816" stroke="#111111" stroke-width="1.2"/>
<circle cx="1280.9" cy="987.9" r="11" fill="#0d4a72"/><path d="M1274.2,987.9 H1287.6" stroke="#fff" stroke-width="2.6"/>
<circle cx="1626.9" cy="987.9" r="11" fill="#0d4a72"/><path d="M1620,987.9 H1633.8 M1626.9,981 V994.8" stroke="#fff" stroke-width="2.6"/>
<path d="M1307.5,987.9 H1600.5" stroke="#939eb0" stroke-width="6.6" stroke-linecap="round"/>
<circle cx="1500.9" cy="987.9" r="8.5" fill="#2878b5"/>
<path d="M1313.6,1000.6 V1009" stroke="#3a3f47" stroke-width="1.1"/>
<path d="M1360.6,1000.6 V1006.6" stroke="#3a3f47" stroke-width="1.1"/>
<path d="M1407.6,1000.6 V1006.6" stroke="#3a3f47" stroke-width="1.1"/>
<path d="M1454.6,1000.6 V1006.6" stroke="#3a3f47" stroke-width="1.1"/>
<path d="M1501.6,1000.6 V1006.6" stroke="#3a3f47" stroke-width="1.1"/>
<path d="M1548.6,1000.6 V1006.6" stroke="#3a3f47" stroke-width="1.1"/>
<path d="M1595.6,1000.6 V1009" stroke="#3a3f47" stroke-width="1.1"/>
<circle cx="1680.2" cy="988.3" r="9.6" fill="none" stroke="#5a5f66" stroke-width="2.2"/>
<rect x="1675.6" y="984.2" width="9" height="8.6" fill="none" stroke="#5a5f66" stroke-width="1.9"/>
<path d="M1673,996 L1664,1005" stroke="#5a5f66" stroke-width="2.6" stroke-linecap="round"/>
</svg>
</body></html>
